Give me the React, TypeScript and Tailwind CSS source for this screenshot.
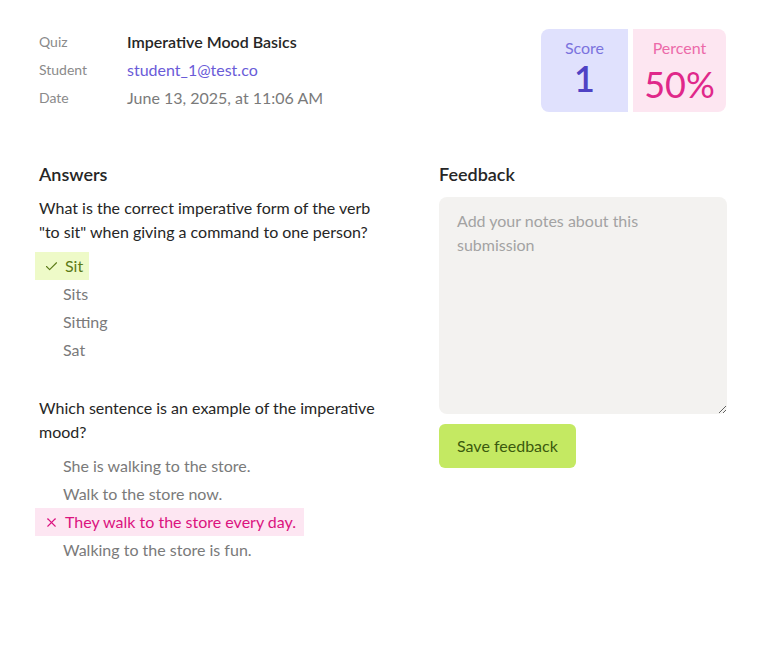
import { Check, X } from "lucide-react";

type Option = { text: string; state?: "correct" | "wrong" };

const questions: { prompt: string; options: Option[] }[] = [
  {
    prompt:
      'What is the correct imperative form of the verb "to sit" when giving a command to one person?',
    options: [
      { text: "Sit", state: "correct" },
      { text: "Sits" },
      { text: "Sitting" },
      { text: "Sat" },
    ],
  },
  {
    prompt: "Which sentence is an example of the imperative mood?",
    options: [
      { text: "She is walking to the store." },
      { text: "Walk to the store now." },
      { text: "They walk to the store every day.", state: "wrong" },
      { text: "Walking to the store is fun." },
    ],
  },
];

function OptionRow({ option }: { option: Option }) {
  if (option.state === "correct") {
    return (
      <div className="-ml-1 flex h-7 w-fit items-center bg-[#eefac8] pr-1.5 pl-[9px] text-[#5b7a17]">
        <Check size={15} strokeWidth={1.75} className="mr-1.5" />
        <span>{option.text}</span>
      </div>
    );
  }
  if (option.state === "wrong") {
    return (
      <div className="-ml-1 flex h-7 w-fit items-center bg-[#fde6f2] pr-2 pl-[9px] text-[#db137f]">
        <X size={15} strokeWidth={1.75} className="mr-1.5" />
        <span>{option.text}</span>
      </div>
    );
  }
  return <div className="flex h-7 items-center pl-6 text-[#7a7a7a]">{option.text}</div>;
}

export default function App() {
  return (
    <div
      className="min-h-screen bg-white pt-[28px] pr-9 pl-[39px] text-[#262626]"
      style={{ fontFamily: 'Lato, sans-serif' }}
    >
      <div className="flex items-start justify-between">
        <div className="text-base">
          <div className="flex h-7 items-center">
            <span className="w-[88px] text-sm text-[#8a8a8a]">Quiz</span>
            <span className="font-semibold text-[#262626]">Imperative Mood Basics</span>
          </div>
          <div className="flex h-7 items-center">
            <span className="w-[88px] text-sm text-[#8a8a8a]">Student</span>
            <span className="text-[#6a5bd8]">student_1@test.co</span>
          </div>
          <div className="flex h-7 items-center">
            <span className="w-[88px] text-sm text-[#8a8a8a]">Date</span>
            <span className="text-[#7a7a7a]">June 13, 2025, at 11:06 AM</span>
          </div>
        </div>
        <div className="mt-px mr-px flex gap-[5px] overflow-hidden rounded-lg">
          <div className="flex h-[83px] w-[87px] flex-col items-center bg-[#e0e1fd] pt-[7px]">
            <span className="text-base text-[#7b73de]">Score</span>
            <span className="-mt-0.5 text-[36px] leading-10 font-semibold text-[#4f42c4]">1</span>
          </div>
          <div className="flex h-[83px] w-[93px] flex-col items-center bg-[#fde6f1] pt-[7px]">
            <span className="text-base text-[#ec6aa9]">Percent</span>
            <span className="mt-1 text-[36px] leading-10 text-[#e0288a]">50%</span>
          </div>
        </div>
      </div>

      <div className="mt-12 flex gap-12">
        <div className="flex-1">
          <h2 className="h-7 text-lg leading-7 font-semibold">Answers</h2>
          {questions.map((q, qi) => (
            <div key={qi} className={qi === 0 ? "mt-2" : "mt-8"}>
              <p className="text-base leading-6">{q.prompt}</p>
              <div className="mt-2 flex flex-col">
                {q.options.map((o) => (
                  <OptionRow key={o.text} option={o} />
                ))}
              </div>
            </div>
          ))}
        </div>
        <div className="w-72">
          <h2 className="h-7 text-lg leading-7 font-semibold">Feedback</h2>
          <textarea
            className="mt-[9px] block h-[217px] w-full resize-y rounded-lg bg-[#f3f2f0] px-[18px] py-3 text-base leading-6 outline-none placeholder:text-[#a3a3a3]"
            placeholder="Add your notes about this submission"
          />
          <button className="mt-2.5 h-11 rounded-md bg-[#c4e962] px-[18px] text-base text-[#3b5a0e]">
            Save feedback
          </button>
        </div>
      </div>
    </div>
  );
}
